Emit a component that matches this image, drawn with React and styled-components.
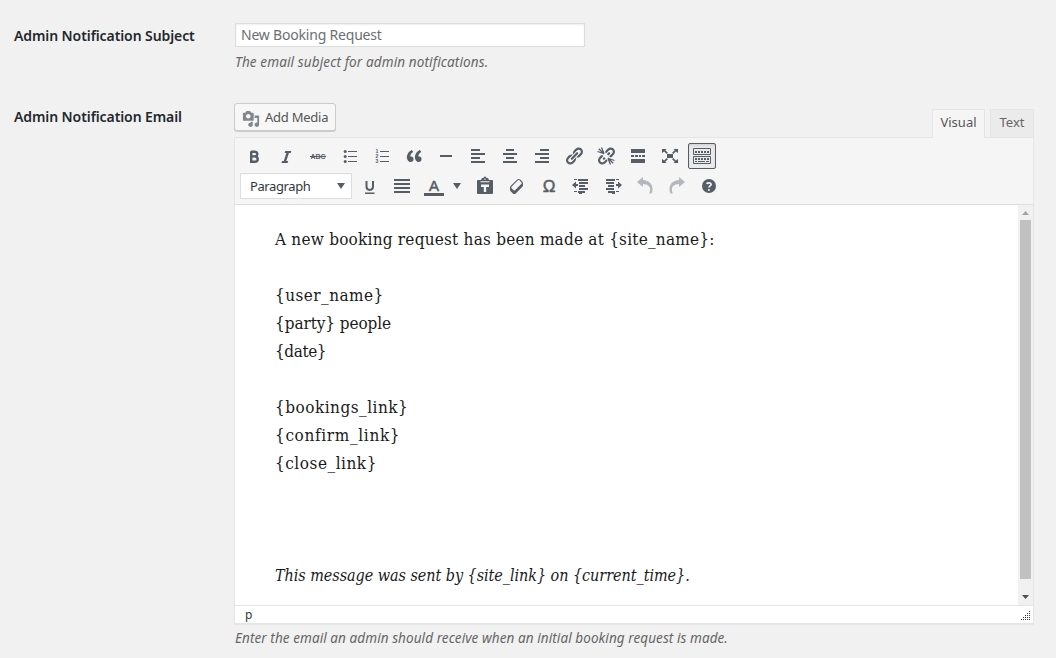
import React from "react";
import styled, { createGlobalStyle } from "styled-components";

const sans = `"Noto Sans", "Open Sans", sans-serif`;
const serif = `"DejaVu Serif Condensed", "DejaVu Serif", serif`;

const GlobalStyle = createGlobalStyle`
  * { box-sizing: border-box; }
  body { margin: 0; background: #f1f1f1; color: #444; font-family: ${sans}; font-size: 13px; overflow: hidden; }
  p { margin: 0; }
`;

const Form = styled.main`
  width: 1056px;
  height: 658px;
  padding: 23px 22px 0 14px;
  overflow: hidden;
`;

const FieldRow = styled.section`
  display: grid;
  grid-template-columns: 220px 800px;
  height: ${(p) => p.$height};
`;

const Label = styled.label`
  color: #23282d;
  font-weight: 600;
  font-size: 14px;
  line-height: 20px;
  padding-top: ${(p) => p.$top};
  letter-spacing: -0.09px;
  white-space: nowrap;
`;

const SubjectInput = styled.input`
  display: block;
  width: 350px;
  height: 24px;
  margin-left: 1px;
  padding: 0 5px 2px;
  border: 1px solid #ddd;
  background: #fff;
  box-shadow: inset 0 1px 2px rgba(0, 0, 0, 0.07);
  color: #6b6f73;
  font: 14px ${sans};
  letter-spacing: -0.2px;
`;

const Description = styled.p`
  padding: ${(p) => p.$top} 0 0 1px;
  color: #666;
  font-size: 13.5px;
  font-style: italic;
  line-height: 20px;
  letter-spacing: ${(p) => p.$track || 0};
  white-space: nowrap;
`;

const EditorHead = styled.div`
  display: flex;
  justify-content: space-between;
  align-items: flex-end;
  height: 35px;
`;

const MediaButton = styled.button`
  display: flex;
  align-items: center;
  align-self: flex-start;
  gap: 5px;
  width: 102px;
  height: 28px;
  margin-top: 1px;
  padding: 0 0 0 7px;
  border: 1px solid #ccc;
  border-radius: 3px;
  background: #f7f7f7;
  box-shadow: 0 1px 0 #ccc;
  color: #555;
  font: 13px ${sans};
  letter-spacing: -0.25px;
  white-space: nowrap;
  svg { color: #82878c; margin-top: 3px; }
`;

const Tabs = styled.div`
  display: flex;
  align-items: flex-start;
  height: 28px;
  gap: 5px;
`;

const Tab = styled.button`
  height: ${(p) => (p.$active ? "29px" : "28px")};
  width: ${(p) => p.$width};
  padding: ${(p) => (p.$active ? "0 0 4px" : "0 0 3px")};
  border: 1px solid #e5e5e5;
  border-bottom: 0;
  background: ${(p) => (p.$active ? "#f5f5f5" : "#ebebeb")};
  color: ${(p) => (p.$active ? "#555" : "#666")};
  font: 13px ${sans};
  position: relative;
`;

const Editor = styled.div`
  height: 487px;
  border: 1px solid #e5e5e5;
  box-shadow: 0 1px 1px rgba(0, 0, 0, 0.04);
  background: #fff;
`;

const Toolbar = styled.div`
  height: 67px;
  padding: 3px 5px;
  border-bottom: 1px solid #ddd;
  background: #f5f5f5;
`;

const ToolRow = styled.div`
  display: flex;
  align-items: center;
  height: 30px;
`;

const ToolButton = styled.button`
  display: flex;
  align-items: center;
  justify-content: center;
  flex: none;
  width: ${(p) => p.$width || "28px"};
  height: 26px;
  margin: ${(p) => p.$margin || "0 4px 0 0"};
  padding: 0;
  border: 1px solid ${(p) => (p.$active ? "#555d66" : "transparent")};
  border-radius: 2px;
  background: ${(p) => (p.$active ? "#ebebeb" : "transparent")};
  box-shadow: ${(p) => (p.$active ? "inset 0 2px 5px -3px rgba(0,0,0,0.3)" : "none")};
  color: #555d66;
  opacity: ${(p) => (p.$disabled ? 0.4 : 1)};
  svg { flex: none; overflow: visible; }
`;

const FormatSelect = styled.button`
  display: flex;
  align-items: center;
  justify-content: space-between;
  width: 112px;
  height: 26px;
  margin-right: 4px;
  padding: 0 6px 0 9px;
  border: 1px solid #ddd;
  background: #fff;
  box-shadow: inset 0 1px 1px -1px rgba(0, 0, 0, 0.2);
  color: #32373c;
  font: 13px ${sans};
  letter-spacing: -0.4px;
  svg { color: #555d66; }
`;

const Canvas = styled.div`
  display: flex;
  height: 400px;
  background: #fff;
`;

const Copy = styled.div`
  flex: 1;
  padding: 20px 0 0 40px;
  color: #1a1a1a;
  font-family: ${serif};
  line-height: 28px;
  white-space: nowrap;
`;

const Line = styled.div`
  height: 28px;
  font-size: ${(p) => (p.$italic ? "16px" : "17px")};
  line-height: ${(p) => (p.$italic ? "30px" : "28px")};
  font-style: ${(p) => (p.$italic ? "italic" : "normal")};
  letter-spacing: ${(p) => p.$track || 0};
`;

const Scrollbar = styled.div`
  display: flex;
  flex-direction: column;
  align-items: center;
  width: 15px;
  background: #f1f1f1;
`;

const Thumb = styled.div`
  width: 11px;
  height: 359px;
  margin: 1px 0 9px;
  background: #c1c1c1;
`;

const StatusBar = styled.div`
  display: flex;
  justify-content: space-between;
  height: 19px;
  padding: 0 2px 0 10px;
  border-top: 1px solid #e5e5e5;
  color: #32373c;
  font-size: 12px;
  line-height: 17px;
`;

const Svg = ({ size = 20, width, height, box, children }) => (
  <svg width={width || size} height={height || size} viewBox={box || "0 0 20 20"} fill="currentColor" aria-hidden="true">
    {children}
  </svg>
);

const rows = (list) => list.map(([x, y, w, h = 2], i) => <rect key={i} x={x} y={y} width={w} height={h} />);

const linkPath =
  "M17.74 2.76c1.68 1.69 1.68 4.41 0 6.1l-1.53 1.52c-1.12 1.12-2.7 1.47-4.14 1.09l2.62-2.61.76-.77.76-.76c.84-.84.84-2.2 0-3.04-.84-.85-2.2-.85-3.04 0l-.77.76-3.38 3.38c-.37-1.44-.02-3.02 1.1-4.14l1.52-1.53c1.69-1.68 4.42-1.68 6.1 0zM8.59 13.43l5.34-5.34c.42-.42.42-1.1 0-1.52-.44-.43-1.13-.39-1.53 0l-5.33 5.34c-.42.42-.42 1.1 0 1.52.44.43 1.13.39 1.52 0zm-.76 2.29l4.14-4.15c.38 1.44.03 3.02-1.09 4.14l-1.52 1.53c-1.69 1.68-4.41 1.68-6.1 0-1.68-1.68-1.68-4.42 0-6.1l1.53-1.52c1.12-1.12 2.7-1.47 4.14-1.1l-4.14 4.15c-.85.84-.85 2.2 0 3.05.84.84 2.2.84 3.04 0z";

const icons = {
  bold: <path fill="none" stroke="currentColor" strokeWidth="2.4" d="M7.200 5.700h3.200c1.900 0 2.900.8 2.900 2.300s-1 2.400-2.900 2.400H7.200m0 0h3.500c2 0 3 .9 3 2.700s-1 2.700-3 2.700H7.200V5.200" />,
  italic: <path d="M15.300 5h-6l-.6 2h1.700l-2.600 8H6l-.6 2h6.200l.6-2h-1.900l2.600-8h1.800z" />,
  strike: (
    <>
      <text x="10" y="12.900" textAnchor="middle" fontFamily="Liberation Sans, sans-serif" fontSize="7.600" fontWeight="700" textLength="15" lengthAdjust="spacingAndGlyphs">ABC</text>
      <rect x="2" y="10" width="16" height="1" />
    </>
  ),
  bullets: (
    <>
      <circle cx="5.200" cy="5.500" r="1.500" /><circle cx="5.200" cy="10.500" r="1.500" /><circle cx="5.200" cy="15.500" r="1.500" />
      {rows([[8, 5, 9, 1], [8, 10, 9, 1], [8, 15, 9, 1]])}
    </>
  ),
  numbers: (
    <>
      <g fontFamily="Liberation Sans, sans-serif" fontSize="5.200" fontWeight="700">
        <text x="3.400" y="6.900">1</text><text x="3.400" y="12">2</text><text x="3.400" y="17.200">3</text>
      </g>
      {rows([[8, 5, 9, 1], [8, 10, 9, 1], [8, 15, 9, 1]])}
    </>
  ),
  quote: <path d="M9.49 13.22c0-.74-.2-1.38-.61-1.9-.62-.78-1.83-.88-2.53-.72-.29-1.65 1.11-3.75 2.92-4.65L7.88 4c-2.73 1.3-5.42 4.28-4.96 8.05C3.21 14.43 4.59 16 6.54 16c.85 0 1.56-.25 2.12-.75s.83-1.18.83-2.03zm8.05 0c0-.74-.2-1.38-.61-1.9-.63-.78-1.83-.88-2.53-.72-.29-1.65 1.11-3.75 2.92-4.65L15.93 4c-2.73 1.3-5.41 4.28-4.95 8.05.29 2.38 1.66 3.95 3.61 3.95.85 0 1.56-.25 2.12-.75s.83-1.18.83-2.03z" />,
  rule: rows([[4, 9, 12]]),
  left: rows([[3, 3, 9], [3, 7, 14], [3, 11, 9], [3, 15, 14]]),
  center: rows([[6, 3, 8], [3, 7, 14], [6, 11, 8], [3, 15, 14]]),
  right: rows([[8, 3, 9], [3, 7, 14], [8, 11, 9], [3, 15, 14]]),
  link: <path d={linkPath} />,
  unlink: (
    <>
      <path d={linkPath} />
      <path d="M4 4l12 12" stroke="#f5f5f5" strokeWidth="4" />
      <path d="M1.500 5.500l6 2M2.800 2.800L8 8M5.500 1.500l2.500 6M18.500 14.500l-6-2M17.200 17.200L12 12M14.500 18.500l-2.500-6" stroke="currentColor" strokeWidth="1.300" />
    </>
  ),
  more: rows([[3, 3, 14, 4], [3, 9, 3], [7, 9, 3], [11, 9, 2], [14, 9, 3], [3, 13, 14, 4]]),
  full: <path d="M7 8h6v4H7zM2 3h4.500L5.300 4.300l2.600 2.500-1.100 1.100-2.600-2.400L2 7zM18 3h-4.500l1.200 1.300-2.600 2.500 1.100 1.100 2.600-2.400L18 7zM2 17h4.500l-1.200-1.300 2.600-2.500-1.100-1.100-2.600 2.400L2 13zM18 17h-4.500l1.200-1.300-2.600-2.500 1.100-1.100 2.600 2.400L18 13z" />,
  keys: (
    <>
      <path fill="none" stroke="currentColor" d="M1.500 2.500h17v6h-17zM1.500 10.500h17v7h-17z" />
      <path stroke="currentColor" strokeWidth="2" strokeDasharray="2 1" d="M3 6h14M3 13h14" />
      <path stroke="currentColor" d="M3 15.500h2M6 15.500h7M14 15.500h3" />
    </>
  ),
  underline: (
    <>
      <path fill="none" stroke="currentColor" strokeWidth="2" d="M6.500 5v5.500c0 2.300 1 3.400 3.200 3.400s3.300-1.100 3.300-3.400V5" />
      <rect x="5" y="16.500" width="9.500" height="1.500" />
    </>
  ),
  justify: rows([[2, 3, 16], [2, 7, 16], [2, 11, 16], [2, 15, 16]]),
  color: (
    <>
      <text x="10" y="15" textAnchor="middle" fontFamily="Liberation Sans, sans-serif" fontSize="15" stroke="currentColor" strokeWidth=".5">A</text>
      <rect x="0" y="17" width="20" height="3" />
    </>
  ),
  paste: (
    <>
      <path d="M3 4h3l1-2h1.500a1.500 1.500 0 0 1 3 0H13l1 2h3q1 0 1 1v12q0 1-1 1H3q-1 0-1-1V5q0-1 1-1z" />
      <path fill="#f5f5f5" d="M5.500 5.200h9v1h-9zM6 8.500h8V11h-2.800v5H8.800v-5H6zM9.400 2.600h1.200v1.200H9.400z" />
    </>
  ),
  eraser: <path d="M14.290 4.590l1.100 1.110c.41.4.61.94.61 1.470v2.120c0 .53-.2 1.070-.61 1.470l-6.630 6.630c-.4.41-.94.61-1.470.61s-1.070-.2-1.470-.61l-1.110-1.100-1.100-1.110c-.41-.4-.61-.94-.61-1.470v-2.120c0-.54.2-1.070.61-1.480l6.630-6.620c.4-.41.94-.61 1.470-.61s1.060.2 1.470.61zm-6.210 9.700l6.420-6.420c.39-.39.39-1.030 0-1.430L12.360 4.300c-.19-.19-.45-.29-.72-.29s-.52.1-.71.29l-6.420 6.420c-.39.4-.39 1.040 0 1.430l2.140 2.140c.38.38 1.040.38 1.430 0z" />,
  omega: <text x="10" y="16.300" textAnchor="middle" fontFamily="Liberation Sans, sans-serif" fontSize="17" stroke="currentColor" strokeWidth=".5">Ω</text>,
  outdent: (
    <>
      {rows([[3, 3, 3, 1], [7, 3, 10], [8, 6, 9], [8, 9, 6], [8, 12, 9], [3, 15, 3, 1], [7, 15, 7], [8, 17, 3, 1]])}
      <path d="M1 9l4-3.500V8h2v2H5v2.500z" />
    </>
  ),
  indent: (
    <>
      {rows([[3, 3, 9], [13, 3, 3, 1], [3, 6, 8], [5, 9, 6], [3, 12, 8], [5, 15, 7], [13, 15, 3, 1], [9, 17, 3, 1]])}
      <path d="M19 9l-4-3.500V8h-2v2h2v2.500z" />
    </>
  ),
  undo: <path d="M2 6l6-5v3c6 .5 9.500 4 9.500 9 0 1.700-.3 3.200-1 4.500h-2.300c.6-1.300.9-2.600.9-4 0-3.200-2.300-5.200-7.100-5.500v3z" />,
  redo: <path d="M18 6l-6-5v3c-6 .5-9.500 4-9.500 9 0 1.700.3 3.200 1 4.500h2.300c-.6-1.300-.9-2.600-.9-4 0-3.200 2.300-5.200 7.100-5.500v3z" />,
  help: (
    <>
      <circle cx="10" cy="10" r="7" />
      <path fill="none" stroke="#f5f5f5" strokeWidth="1.700" d="M7.500 7.700c1.600-1.100 4.600-1.100 4.600.7 0 1.500-2.200 1.500-2.200 3.200" />
      <circle cx="9.900" cy="13.900" r="1" fill="#f5f5f5" />
    </>
  ),
};

const firstRow = ["bold", "italic", "strike", "bullets", "numbers", "quote", "rule", "left", "center", "right", "link", "unlink", "more", "full", "keys"];
const secondRow = ["paste", "eraser", "omega", "outdent", "indent", "undo", "redo", "help"];

const Tool = ({ name, ...rest }) => (
  <ToolButton aria-label={name} {...rest}>
    <Svg>{icons[name]}</Svg>
  </ToolButton>
);

const lines = [
  ["A new booking request has been made at {site_name}:", "0.23px"],
  [""],
  ["{user_name}", "0.45px"],
  ["{party} people", "-0.07px"],
  ["{date}", "-0.4px"],
  [""],
  ["{bookings_link}", "0.5px"],
  ["{confirm_link}", "0.66px"],
  ["{close_link}", "0.53px"],
  [""],
  [""],
  [""],
  ["This message was sent by {site_link} on {current_time}.", "-0.04px", true],
];

export default function App() {
  return (
    <Form>
      <GlobalStyle />
      <FieldRow $height="79px">
        <Label $top="3px">Admin Notification Subject</Label>
        <div>
          <SubjectInput defaultValue="New Booking Request" />
          <Description $top="5px" $track="0.13px">The email subject for admin notifications.</Description>
        </div>
      </FieldRow>
      <FieldRow $height="556px">
        <Label $top="5px">Admin Notification Email</Label>
        <div>
          <EditorHead>
            <MediaButton>
              <Svg size={18}>
                <path d="M13 11V4c0-.55-.45-1-1-1h-1.670L9 1H5L3.670 3H2c-.55 0-1 .45-1 1v7c0 .55.45 1 1 1h10c.55 0 1-.45 1-1zM7 4.500c1.380 0 2.500 1.120 2.500 2.500S8.380 9.500 7 9.500 4.500 8.380 4.500 7 5.620 4.500 7 4.500zM14 6h5v10.500c0 1.380-1.120 2.500-2.500 2.500S14 17.880 14 16.500s1.120-2.500 2.500-2.500c.17 0 .34.02.5.05V9h-3V6zm-4 8.050V13h2v3.500c0 1.380-1.120 2.500-2.500 2.500S7 17.880 7 16.500 8.120 14 9.500 14c.17 0 .34.02.5.05z" />
              </Svg>
              Add Media
            </MediaButton>
            <Tabs>
              <Tab $active $width="53px">Visual</Tab>
              <Tab $width="44px">Text</Tab>
            </Tabs>
          </EditorHead>
          <Editor>
            <Toolbar>
              <ToolRow>
                {firstRow.map((name) => (
                  <Tool key={name} name={name} $active={name === "keys"} />
                ))}
              </ToolRow>
              <ToolRow>
                <FormatSelect>
                  Paragraph
                  <Svg width={8} height={6} box="0 0 8 6"><path d="M0 0h8L4 6z" /></Svg>
                </FormatSelect>
                <Tool name="underline" />
                <Tool name="justify" />
                <Tool name="color" $margin="0" />
                <ToolButton aria-label="Text color options" $width="16px" $margin="0 6px 0 1px">
                  <Svg width={8} height={6} box="0 0 8 6"><path d="M0 0h8L4 6z" /></Svg>
                </ToolButton>
                {secondRow.map((name) => (
                  <Tool key={name} name={name} $disabled={name === "undo" || name === "redo"} />
                ))}
              </ToolRow>
            </Toolbar>
            <Canvas>
              <Copy>
                {lines.map(([text, track, italic], i) => (
                  <Line key={i} $track={track} $italic={italic}>{text}</Line>
                ))}
              </Copy>
              <Scrollbar>
                <Svg width={15} height={14} box="0 0 15 14"><path fill="#a3a3a3" d="M4 10h7L7.500 6z" /></Svg>
                <Thumb />
                <Svg width={15} height={17} box="0 0 15 17"><path fill="#505050" d="M4 7h7l-3.500 4z" /></Svg>
              </Scrollbar>
            </Canvas>
            <StatusBar>
              <span>p</span>
              <Svg width={10} height={18} box="0 0 10 18">
                {[[8, 5], [6, 7], [8, 7], [4, 9], [6, 9], [8, 9], [2, 11], [4, 11], [6, 11], [8, 11], [0, 13], [2, 13], [4, 13], [6, 13], [8, 13]].map(([x, y]) => (
                  <rect key={`${x}-${y}`} x={x} y={y} width="1" height="1" />
                ))}
              </Svg>
            </StatusBar>
          </Editor>
          <Description $top="4px" $track="0.08px">Enter the email an admin should receive when an initial booking request is made.</Description>
        </div>
      </FieldRow>
    </Form>
  );
}
